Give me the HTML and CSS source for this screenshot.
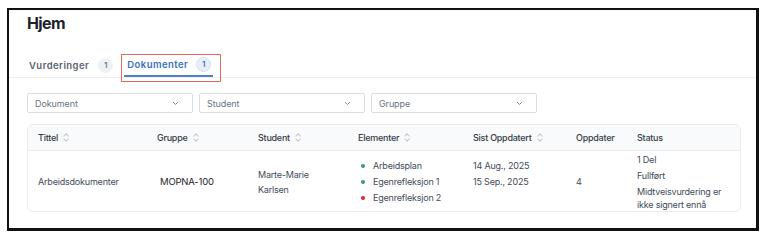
FILE: index.html
```html
<!DOCTYPE html>
<html lang="no">
<head>
    <meta charset="utf-8">
    <title>Hjem</title>
    <link rel="stylesheet" href="styles.css">
</head>
<body>
    <div class="frame">
        <h1 class="title">Hjem</h1>

        <div class="tabs">
            <div class="tab">Vurderinger <span class="badge">1</span></div>
            <div class="tab-outline">
                <div class="tab active">Dokumenter <span class="badge">1</span></div>
            </div>
        </div>

        <div class="filters">
            <div class="select">Dokument
                <svg class="chev" width="7" height="5" viewBox="0 0 7 5"><path d="M1 1l2.5 2.5L6 1" fill="none" stroke="#8a9099" stroke-width="1"/></svg>
            </div>
            <div class="select">Student
                <svg class="chev" width="7" height="5" viewBox="0 0 7 5"><path d="M1 1l2.5 2.5L6 1" fill="none" stroke="#8a9099" stroke-width="1"/></svg>
            </div>
            <div class="select">Gruppe
                <svg class="chev" width="7" height="5" viewBox="0 0 7 5"><path d="M1 1l2.5 2.5L6 1" fill="none" stroke="#8a9099" stroke-width="1"/></svg>
            </div>
        </div>

        <div class="card">
            <div class="row head">
                <div class="th">Tittel <span class="sort"></span></div>
                <div class="th">Gruppe <span class="sort"></span></div>
                <div class="th">Student <span class="sort"></span></div>
                <div class="th">Elementer <span class="sort"></span></div>
                <div class="th">Sist Oppdatert <span class="sort"></span></div>
                <div class="th">Oppdater</div>
                <div class="th">Status</div>
            </div>
            <div class="row body">
                <div class="td">Arbeidsdokumenter</div>
                <div class="td group">MOPNA-100</div>
                <div class="td">Marte-Marie<br>Karlsen</div>
                <div class="td">
                    <ul class="elements">
                        <li><span class="dot green"></span>Arbeidsplan</li>
                        <li><span class="dot green"></span>Egenrefleksjon 1</li>
                        <li><span class="dot red"></span>Egenrefleksjon 2</li>
                    </ul>
                </div>
                <div class="td dates">14 Aug., 2025<br>15 Sep., 2025</div>
                <div class="td">4</div>
                <div class="td status">
                    <div>1 Del</div>
                    <div>Fullført</div>
                    <div>Midtveisvurdering er ikke signert ennå</div>
                </div>
            </div>
        </div>
    </div>
</body>
</html>
```

FILE: styles.css
```css
* {
    box-sizing: border-box;
}

body {
    margin: 0;
    font-family: Inter, "Noto Sans", sans-serif;
    background: #fff;
    color: #3f4856;
}

.frame {
    margin: 8px 9px 0 7px;
    height: 223px;
    border: 2px solid #111;
    border-right-width: 3px;
    border-bottom-width: 3px;
}

.title {
    margin: 0;
    padding: 3px 0 0 18px;
    font-size: 16px;
    font-weight: 700;
    letter-spacing: -0.6px;
    color: #1d232c;
    line-height: 20px;
}

.tabs {
    display: flex;
    align-items: flex-end;
    margin-top: 21px;
    padding-left: 20px;
    border-bottom: 1px solid #eceef1;
}

.tab {
    display: flex;
    align-items: center;
    gap: 9px;
    height: 23px;
    font-size: 9.5px;
    font-weight: 600;
    letter-spacing: 0.45px;
    color: #5a6270;
    margin-right: 8px;
}

.tab-outline {
    display: flex;
    align-items: flex-end;
    width: 100px;
    height: 28px;
    margin-bottom: -5px;
    padding: 0 0 4px 2px;
    border: 1px solid #e06a5c;
}

.tab.active {
    color: #3d70c2;
    margin-right: 0;
    border-bottom: 2px solid #4f80cc;
    padding: 0 2px 0 3px;
    gap: 8px;
}

.badge {
    display: inline-flex;
    align-items: center;
    justify-content: center;
    width: 15px;
    height: 15px;
    border-radius: 50%;
    background: #eef1f5;
    font-size: 7.5px;
    letter-spacing: 0;
    color: #6b7280;
}

.tab.active .badge {
    background: #e6eef9;
    border: 1px solid #d4e1f3;
    color: #3d70c2;
}

.filters {
    display: flex;
    gap: 6px;
    margin: 15px 0 0 18px;
}

.select {
    display: flex;
    align-items: center;
    justify-content: space-between;
    width: 166px;
    height: 20px;
    padding: 0 13px 0 7px;
    border: 1px solid #d9dce1;
    border-radius: 2px;
    font-size: 9px;
    letter-spacing: -0.1px;
    color: #6c737e;
}

.card {
    margin: 11px 15px 0 18px;
    border: 1px solid #eaecef;
    border-radius: 6px;
    overflow: hidden;
}

.row {
    display: grid;
    grid-template-columns: 119px 101px 100px 115px 103px 61px 1fr;
    padding-left: 10px;
}

.head {
    height: 26px;
    align-items: center;
    background: #f9fafb;
    border-bottom: 1px solid #eceef1;
}

.th {
    display: flex;
    align-items: center;
    gap: 5px;
    font-size: 9px;
    font-weight: 500;
    letter-spacing: -0.25px;
    color: #343c48;
}

.sort {
    position: relative;
    width: 6px;
    height: 9px;
}

.sort::before,
.sort::after {
    content: "";
    position: absolute;
    left: 1px;
    width: 3px;
    height: 3px;
    border-left: 1px solid #c3c7ce;
    border-top: 1px solid #c3c7ce;
    transform: rotate(45deg);
}

.sort::before {
    top: 1px;
}

.sort::after {
    bottom: 1px;
    transform: rotate(-135deg);
}

.body {
    min-height: 60px;
    align-items: center;
    padding-top: 1px;
}

.td {
    font-size: 9px;
    letter-spacing: -0.2px;
    line-height: 15px;
    color: #424b59;
}

.group {
    padding-left: 3px;
    font-size: 9.5px;
    color: #1f242b;
}

.elements {
    list-style: none;
    margin: 0;
    padding: 0 0 0 3px;
}

.elements li {
    display: flex;
    align-items: center;
    line-height: 16px;
}

.dot {
    width: 4px;
    height: 4px;
    border-radius: 50%;
    margin-right: 8px;
}

.green {
    background: #3f9a72;
}

.red {
    background: #d8262e;
}

.dates {
    line-height: 16px;
    margin-bottom: 16px;
}

.status {
    display: flex;
    flex-direction: column;
    gap: 3px;
    line-height: 13px;
    padding-right: 12px;
}
```
